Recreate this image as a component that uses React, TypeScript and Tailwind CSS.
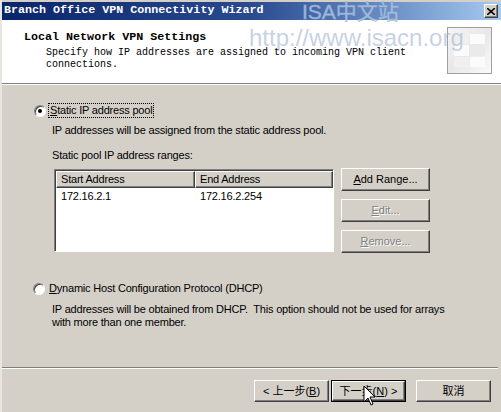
import React from 'react';

const ui = { fontFamily: '"Liberation Sans", Arial, sans-serif' };
const mono = { fontFamily: '"Liberation Mono", "Courier New", monospace' };
const cjk = { fontFamily: '"Liberation Sans", "Noto Sans CJK SC", sans-serif' };

// classic 3D raised edge used by the push buttons
const raised =
  'border border-t-white border-l-white border-r-[#404040] border-b-[#404040] shadow-[inset_-1px_-1px_0_#808080]';

const Radio: React.FC<{ checked?: boolean }> = ({ checked }) => (
  <span className="relative inline-block w-[12px] h-[12px] rounded-full bg-white border border-t-[#808080] border-l-[#808080] border-r-white border-b-white shadow-[inset_1px_1px_0_#404040]">
    {checked && <span className="absolute left-[3px] top-[3px] w-[4px] h-[4px] rounded-full bg-black" />}
  </span>
);

const PushButton: React.FC<{ label: React.ReactNode; disabled?: boolean; className?: string }> = ({
  label,
  disabled,
  className = '',
}) => (
  <div
    className={`flex items-center justify-center bg-[#d4d0c8] text-[11px] ${raised} ${
      disabled ? 'text-[#808080] [text-shadow:1px_1px_0_#fff]' : 'text-black'
    } ${className}`}
  >
    {label}
  </div>
);

const Cursor = () => (
  <svg className="absolute left-[361px] top-[385px]" width="14" height="22" viewBox="0 0 14 22">
    <path d="M1 1 L1 17 L5 13 L8 20 L10 19 L7 12 L12 12 Z" fill="#fff" stroke="#000" strokeWidth="1" />
  </svg>
);

export default function App() {
  return (
    <div className="relative w-[501px] h-[412px] overflow-hidden bg-[#d4d0c8] border-l-2 border-l-[#e8e6e0]" style={ui}>
      {/* title bar */}
      <div className="mt-[2px] h-[18px] flex items-center justify-between pl-[2px] pr-[3px] bg-gradient-to-r from-[#0a246a] via-[#2a4a90] to-[#a6caf0]">
        <span className="text-white font-bold text-[11.7px] leading-none" style={mono}>
          Branch Office VPN Connectivity Wizard
        </span>
        <span className={`w-[14px] h-[14px] flex items-center justify-center bg-[#d4d0c8] ${raised}`}>
          <svg width="8" height="7" viewBox="0 0 8 7">
            <path d="M0 0 L8 7 M8 0 L0 7" stroke="#000" strokeWidth="1.6" />
          </svg>
        </span>
      </div>

      {/* header */}
      <div className="h-[64px] bg-white flex justify-between border-b border-b-[#808080]">
        <div className="pt-[10px] pl-[22px]" style={mono}>
          <div className="text-[11.7px] font-bold leading-[14px]">Local Network VPN Settings</div>
          <div className="pl-[22px] text-[10px] leading-[12px] mt-[3px]">
            Specify how IP addresses are assigned to incoming VPN client
            <br />
            connections.
          </div>
        </div>
        <div className="mt-[7px] mr-[9px] w-[45px] h-[47px] border border-[#a0a0a0] bg-gradient-to-br from-[#f4f4f4] via-[#e8e8e8] to-[#fafafa] grid grid-cols-2 grid-rows-3 gap-px p-[6px]">
          <div className="bg-[#efefef]" />
          <div className="bg-[#fbfbfb]" />
          <div className="bg-[#fbfbfb]" />
          <div className="bg-[#eaeaea]" />
          <div className="bg-[#f0f0f0]" />
          <div className="bg-[#fbfbfb]" />
        </div>
      </div>
      <div className="h-px bg-white" />

      {/* body */}
      <div className="pl-[32px] pt-[19px] text-[11px] tracking-[-0.2px] text-black leading-[13px]">
        <div className="flex items-center gap-[3px]">
          <Radio checked />
          <span className="px-px outline-1 outline-dotted outline-black">
            <u>S</u>tatic IP address pool
          </span>
        </div>
        <div className="pl-[18px] mt-[7px]">IP addresses will be assigned from the static address pool.</div>
        <div className="pl-[18px] mt-[12px]">Static pool IP address ranges:</div>

        <div className="flex mt-[7px] pl-[20px]">
          <div className="w-[280px] h-[83px] bg-white border border-t-[#808080] border-l-[#808080] border-r-white border-b-white shadow-[inset_1px_1px_0_#404040]">
            <div className="flex h-[17px] mt-px ml-px">
              <div className={`w-[139px] bg-[#d4d0c8] pl-[4px] flex items-center ${raised}`}>Start Address</div>
              <div className={`flex-1 bg-[#d4d0c8] pl-[4px] flex items-center ${raised}`}>End Address</div>
            </div>
            <div className="flex h-[15px] items-center mt-[1px]">
              <div className="w-[140px] pl-[6px]">172.16.2.1</div>
              <div className="pl-[5px]">172.16.2.254</div>
            </div>
          </div>
          <div className="ml-[7px] flex flex-col gap-[8px] -mt-px tracking-normal">
            <PushButton className="w-[89px] h-[23px]" label={<><u>A</u>dd Range...</>} />
            <PushButton disabled className="w-[89px] h-[23px]" label={<><u>E</u>dit...</>} />
            <PushButton disabled className="w-[89px] h-[23px]" label={<><u>R</u>emove...</>} />
          </div>
        </div>

        <div className="flex items-center gap-[4px] mt-[29px] -ml-px">
          <Radio />
          <span>
            <u>D</u>ynamic Host Configuration Protocol (DHCP)
          </span>
        </div>
        <div className="pl-[18px] mt-[8px]">
          IP addresses will be obtained from DHCP.&nbsp; This option should not be used for arrays
          <br />
          with more than one member.
        </div>
      </div>

      {/* footer */}
      <div className="absolute left-0 right-[3px] top-[367px] h-px bg-[#808080]" />
      <div className="absolute left-0 right-[3px] top-[368px] h-px bg-white" />
      <div className="absolute left-[252px] top-[380px] flex gap-[2px] text-[12px]" style={cjk}>
        <PushButton className="w-[75px] h-[22px]" label={<>&lt; 上一步(<u>B</u>)</>} />
        <div className="border border-black">
          <PushButton className="w-[73px] h-[20px]" label={<>下一步(<u>N</u>) &gt;</>} />
        </div>
        <PushButton className="w-[75px] h-[22px] ml-[8px]" label="取消" />
      </div>

      {/* site watermark */}
      <div
        className="absolute left-[300px] top-[1px] text-[21px] leading-none text-[#c9daf0]/70 [-webkit-text-stroke:0.5px_#8fabd2]"
        style={{ fontFamily: '"Liberation Sans", "Noto Sans CJK SC", sans-serif' }}
      >
        ISA中文站
      </div>
      <div className="absolute left-[247px] top-[26px] text-[24px] leading-none text-[#9fb3cf]/60 pointer-events-none">
        http://www.isacn.org
      </div>

      <Cursor />
    </div>
  );
}
